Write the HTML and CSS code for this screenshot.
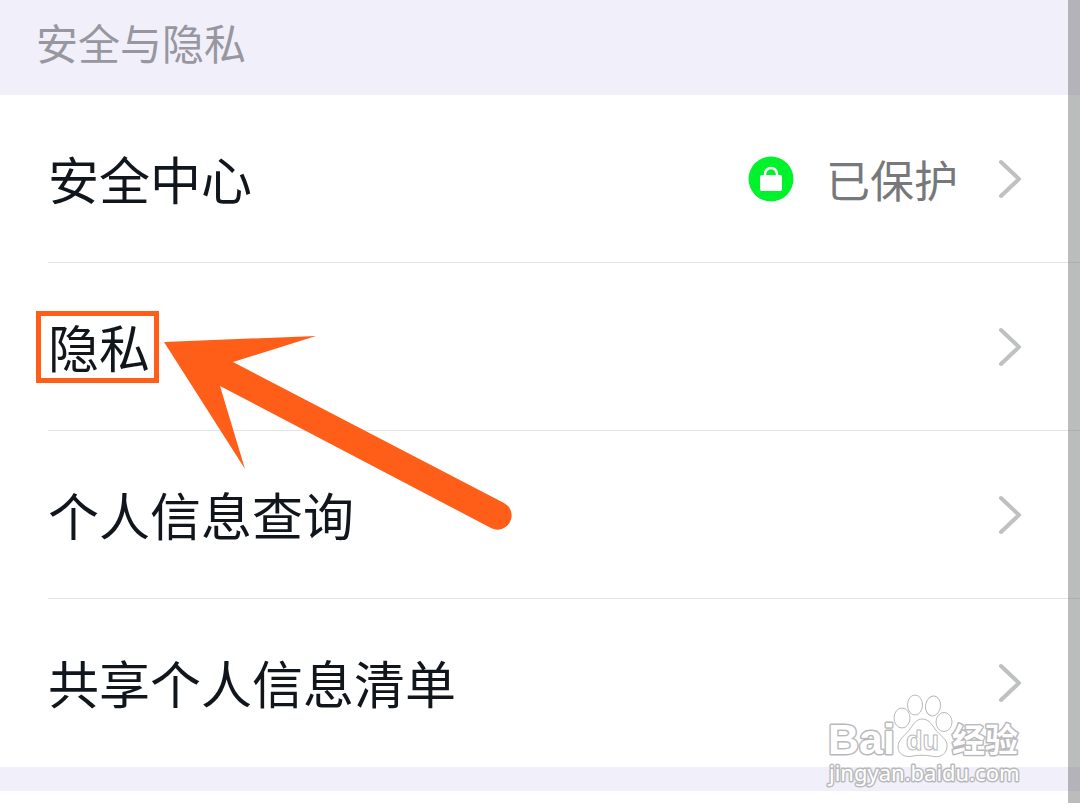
FILE: index.html
```html
<!doctype html>
<html lang="zh-CN">
	<head>
		<meta charset="utf-8">
		<title>安全与隐私</title>

		<link rel="stylesheet" href="styles.css">
	</head>
	<body>
		<main class="settings">
			<h1 class="heading">安全与隐私</h1>

			<nav class="list">
				<a class="row" href="#security">
					<span class="label">安全中心</span>
					<svg class="lock" viewBox="0 0 46 46" aria-hidden="true">
						<circle cx="23" cy="23" r="22.5" fill="#00f22c"/>
						<path d="M17 21v-3a6 6 0 0 1 12 0v3" fill="none" stroke="#fff" stroke-width="2.5"/>
						<rect x="12" y="19" width="22" height="16" rx="2" fill="#fff"/>
					</svg>
					<span class="status">已保护</span>
					<svg class="chevron" viewBox="0 0 24 40" aria-hidden="true"><path d="M3 3l18 17L3 37"/></svg>
				</a>
				<a class="row" href="#privacy">
					<span class="label highlight">隐私
						<svg class="arrow" viewBox="0 0 350 196" aria-hidden="true">
							<path d="M0 7L152 1L69 27L340 168A14 14 0 0 1 327 193L56 51L81 134Z"/>
						</svg>
					</span>
					<svg class="chevron" viewBox="0 0 24 40" aria-hidden="true"><path d="M3 3l18 17L3 37"/></svg>
				</a>
				<a class="row" href="#query">
					<span class="label">个人信息查询</span>
					<svg class="chevron" viewBox="0 0 24 40" aria-hidden="true"><path d="M3 3l18 17L3 37"/></svg>
				</a>
				<a class="row" href="#shared">
					<span class="label">共享个人信息清单</span>
					<svg class="chevron" viewBox="0 0 24 40" aria-hidden="true"><path d="M3 3l18 17L3 37"/></svg>
				</a>
			</nav>

			<div class="divider"></div>
			<div class="next"></div>
			<div class="scrollbar"></div>

			<svg class="watermark" viewBox="0 0 210 100" role="img" aria-label="Baidu 经验">
				<text class="latin" x="8" y="64">Bai</text>
				<path d="M102 29c6 0 9 4 13 10 5 7 13 10 12 18-1 9-9 11-16 9-6-1-12-1-18 0-8 2-15-2-15-9 0-8 7-11 12-18 4-6 7-10 12-10z"/>
				<ellipse cx="82" cy="28" rx="8" ry="10"/>
				<ellipse cx="95" cy="15" rx="7.5" ry="10"/>
				<ellipse cx="113" cy="16" rx="7.5" ry="10" transform="rotate(8 113 16)"/>
				<ellipse cx="124" cy="32" rx="8" ry="9.5"/>
				<text class="du" x="86" y="60">du</text>
				<text class="cjk" x="132" y="62">经验</text>
				<text class="url" x="9" y="91">jingyan.baidu.com</text>
			</svg>
		</main>
	</body>
</html>
```

FILE: styles.css
```css
body {
	margin: 0;
	background: #fff;
	color: #10161c;
	font-family: "Noto Sans CJK SC", sans-serif;
}

.settings {
	position: relative;
	overflow: hidden;
}

.heading {
	margin: 0;
	padding: 12px 36px 23px;
	background: #f0effa;
	color: #98979f;
	font-size: 42px;
	font-weight: 400;
	line-height: 60px;
}

.list {
	padding-left: 48px;
}

.row {
	display: flex;
	align-items: center;
	height: 167px;
	padding-right: 58px;
	border-bottom: 1px solid #e3e4e6;
	color: inherit;
	text-decoration: none;
}

.row:last-child {
	border-bottom-color: transparent;
}

.label {
	margin-right: auto;
	padding-bottom: 2px;
	font-size: 51px;
	line-height: 60px;
}

.highlight {
	position: relative;
	margin-left: -12px;
	padding-right: 4px;
	padding-left: 7px;
	border: 5px solid #ff5e18;
}

.arrow {
	position: absolute;
	top: 19px;
	left: 123px;
	z-index: 1;
	width: 350px;
	height: 196px;
	fill: #ff5e18;
}

.lock {
	width: 46px;
	height: 46px;
	margin-right: 32px;
}

.status {
	margin-right: 40px;
	color: #77787a;
	font-size: 44px;
	line-height: 60px;
}

.chevron {
	width: 24px;
	height: 40px;
	fill: none;
	stroke: #bfc0c1;
	stroke-width: 4;
	stroke-linecap: round;
	stroke-linejoin: round;
}

.divider {
	height: 24px;
	background: #f0effa;
}

.next {
	height: 12px;
}

.scrollbar {
	position: absolute;
	top: 0;
	right: 0;
	bottom: 0;
	width: 12px;
	background: rgba(110, 112, 112, 0.47);
}

.watermark {
	position: absolute;
	right: 50px;
	bottom: 13px;
	width: 210px;
	height: 100px;
	fill: #fff;
	stroke: #b9b9bb;
	stroke-width: 1;
}

.watermark text {
	paint-order: stroke;
	stroke-width: 3;
	stroke-linejoin: round;
}

.latin {
	font: bold 43px "Liberation Sans", sans-serif;
}

.watermark .du {
	font: bold 27px "Liberation Sans", sans-serif;
	paint-order: normal;
	stroke-width: 1;
}

.cjk {
	font: bold 33px "Noto Sans CJK SC", sans-serif;
}

.url {
	font: 22px "Noto Sans", sans-serif;
}
```
